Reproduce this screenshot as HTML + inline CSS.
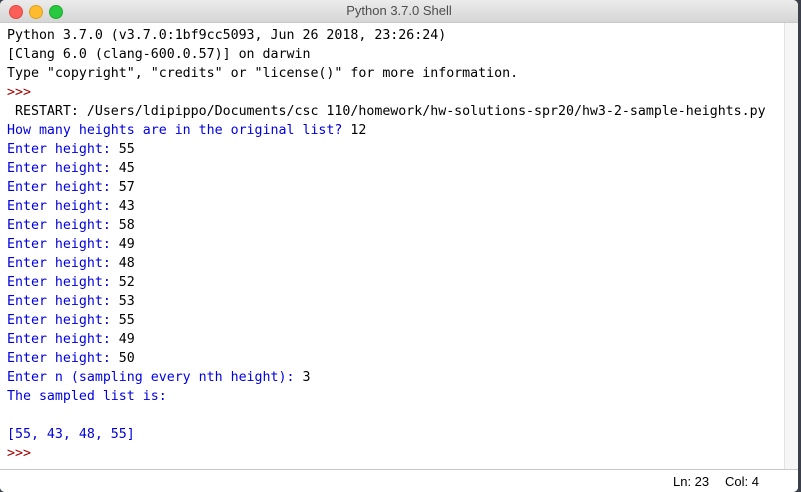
<!DOCTYPE html>
<html><head><style>
body{margin:0;width:801px;height:492px;overflow:hidden;background:#3a3f4a;font-family:"DejaVu Sans Mono",monospace;}
.win{position:absolute;left:0;top:0;width:798px;height:492px;background:#fff;border-radius:5px 5px 5px 5px;overflow:hidden;}
.title{height:22px;background:linear-gradient(#ececec,#d6d6d6);border-bottom:1px solid #c8c8c8;text-align:center;font:13px "Liberation Sans",sans-serif;color:#4d4d4d;line-height:22px;position:relative;}
.dot{position:absolute;top:5px;width:12px;height:12px;border-radius:50%;}
.sb{position:absolute;left:784px;top:23px;width:14px;height:447px;background:#f6f6f6;border-left:1px solid #e3e3e3;}
pre{position:absolute;left:7px;top:26px;margin:0;font-family:"DejaVu Sans Mono",monospace;font-size:13.3px;letter-spacing:-0.02px;line-height:19px;color:#000;}
.b{color:#0000e0}.r{color:#a00000}
.status{position:absolute;left:0;top:469px;width:798px;height:23px;border-top:1px solid #c9c9c9;background:#fff;font:13px "Liberation Sans",sans-serif;}
</style></head><body>
<div class="win">
<div class="title">Python 3.7.0 Shell
<div class="dot" style="left:9px;background:#fc5f57;border:0.5px solid #de4a42"></div>
<div class="dot" style="left:29px;background:#fdbc2e;border:0.5px solid #dea123"></div>
<div class="dot" style="left:49px;background:#28c840;border:0.5px solid #1faa2f"></div>
</div>
<pre>Python 3.7.0 (v3.7.0:1bf9cc5093, Jun 26 2018, 23:26:24)
[Clang 6.0 (clang-600.0.57)] on darwin
Type "copyright", "credits" or "license()" for more information.
<span class="r">&gt;&gt;&gt;</span>
 RESTART: /Users/ldipippo/Documents/csc 110/homework/hw-solutions-spr20/hw3-2-sample-heights.py
<span class="b">How many heights are in the original list? </span>12
<span class="b">Enter height: </span>55
<span class="b">Enter height: </span>45
<span class="b">Enter height: </span>57
<span class="b">Enter height: </span>43
<span class="b">Enter height: </span>58
<span class="b">Enter height: </span>49
<span class="b">Enter height: </span>48
<span class="b">Enter height: </span>52
<span class="b">Enter height: </span>53
<span class="b">Enter height: </span>55
<span class="b">Enter height: </span>49
<span class="b">Enter height: </span>50
<span class="b">Enter n (sampling every nth height): </span>3
<span class="b">The sampled list is:</span>

<span class="b">[55, 43, 48, 55]</span>
<span class="r">&gt;&gt;&gt;</span> </pre>
<div class="sb"></div>
<div class="status"><span style="position:absolute;left:673px;top:4px">Ln: 23</span><span style="position:absolute;left:725px;top:4px">Col: 4</span></div>
</div>
</body></html>
